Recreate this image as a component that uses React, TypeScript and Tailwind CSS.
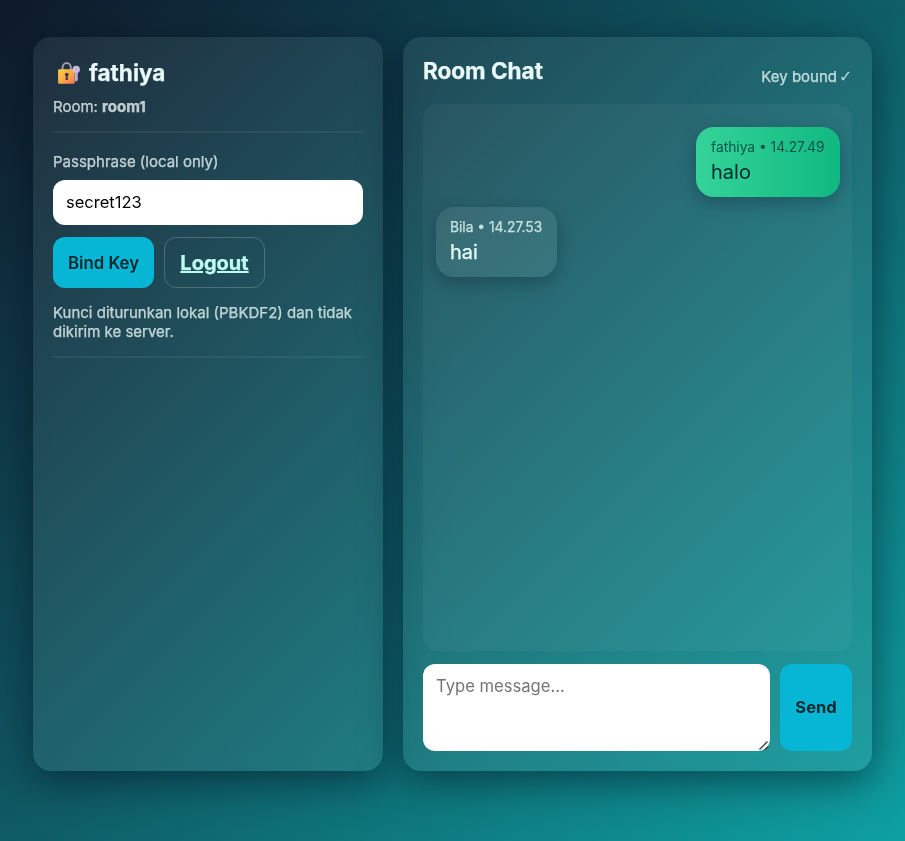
import React from "react";

const card =
  "rounded-[18px] bg-white/[0.07] p-5 shadow-[0_10px_40px_rgba(2,6,23,0.5)] backdrop-blur-[8px]";

const note = "text-[15px] leading-[19px] text-[#f0fcfa]/75 [-webkit-text-stroke:0.25px]";

function LockKey() {
  return (
    <svg width="24" height="24" viewBox="0 0 24 24" className="ml-[3px] shrink-0">
      <defs>
        <linearGradient id="lock" x1="0" y1="0" x2="1" y2="1">
          <stop offset="0" stopColor="#ffd04a" />
          <stop offset="0.55" stopColor="#fba83e" />
          <stop offset="1" stopColor="#f5745a" />
        </linearGradient>
      </defs>
      <path d="M6.6 9V6.2a4.1 4.1 0 0 1 8.2 0V9" fill="none" stroke="#a99fb3" strokeWidth="1.9" />
      <rect x="2.1" y="8.3" width="16.6" height="14.4" rx="1.2" fill="url(#lock)" />
      <circle cx="10.8" cy="13.6" r="1.9" fill="#4b3054" />
      <path d="M10 14.5h1.6l.4 4.6H9.5z" fill="#4b3054" />
      <circle cx="20.2" cy="8.5" r="3.7" fill="#cbbcdc" />
      <path d="M18.8 11h3v8l-1.4 1.8-1.6-1.4z" fill="#c0aed4" />
      <circle cx="20.4" cy="7.1" r=".7" fill="#a897bb" />
    </svg>
  );
}

export default function App() {
  return (
    <div className="flex h-[841px] gap-5 bg-[linear-gradient(135deg,#0f192b,#0ea0a1)] pt-[37px] pr-[33px] pb-[70px] pl-[33px] font-['Inter',sans-serif] text-[#e6fffa]">
      <aside className={`${card} w-[350px] shrink-0`}>
        <h2 className="flex h-8 items-center text-[22.5px] leading-8 font-bold text-[#e9f9f8] [-webkit-text-stroke:0.25px]">
          <LockKey />
          <span className="ml-[9px]">fathiya</span>
        </h2>
        <p className={`${note} mt-2`}>
          Room: <b className="font-bold">room1</b>
        </p>
        <hr className="mt-[15px] border-t-2 border-white/[0.06]" />
        <label className={`${note} mt-[19px] block`}>Passphrase (local only)</label>
        <input
          className="mt-[9px] block h-[45px] w-full rounded-xl bg-white px-[13px] pb-[2px] text-[16.5px] text-black"
          defaultValue="secret123"
        />
        <div className="mt-3 flex gap-[10px]">
          <button className="h-[51px] w-[101px] rounded-xl bg-[#06b6d4] pt-[2px] text-[16.8px] font-semibold whitespace-nowrap text-[#04282c]">
            Bind Key
          </button>
          <a className="flex h-[51px] w-[101px] items-center justify-center rounded-xl border border-white/20 text-[20px] font-bold text-[#bdfcf3] underline [-webkit-text-stroke:0.25px]">
            Logout
          </a>
        </div>
        <p className={`${note} mt-[15px]`}>
          Kunci diturunkan lokal (PBKDF2) dan tidak dikirim ke server.
        </p>
        <hr className="mt-[15px] border-t-2 border-white/[0.06]" />
      </aside>

      <main className={`${card} flex min-w-0 flex-1 flex-col`}>
        <header className="flex h-[47px] justify-between">
          <h2 className="text-[22.5px] leading-[28px] font-bold text-[#e9f9f8] [-webkit-text-stroke:0.25px]">
            Room Chat
          </h2>
          <span className={`${note} mt-[10px] flex`}>
            Key bound
            <span className="ml-[2px] w-[13px] font-['DejaVu_Sans',sans-serif] text-[16px] [-webkit-text-stroke:0px]">✓</span>
          </span>
        </header>
        <section className="flex flex-1 flex-col rounded-[14px] bg-white/[0.04] pt-[23px] pr-3 pl-[13px]">
          <div className="h-[70px] w-[144px] self-end rounded-[18px] bg-[linear-gradient(90deg,#34d399,#10b981)] px-[15px] pt-[11px] text-[#04282c] shadow-[0_6px_18px_rgba(2,6,23,0.25)]">
            <div className="text-[13.8px] leading-[18px] whitespace-nowrap opacity-75">fathiya • 14.27.49</div>
            <div className="mt-[2px] text-[20px] leading-[28px]">halo</div>
          </div>
          <div className="mt-[10px] h-[70px] w-[121px] self-start rounded-[18px] bg-white/[0.08] px-[14px] pt-[11px] shadow-[0_6px_18px_rgba(2,6,23,0.25)] [-webkit-text-stroke:0.25px]">
            <div className="text-[13.8px] leading-[18px] whitespace-nowrap opacity-80">Bila • 14.27.53</div>
            <div className="mt-[2px] text-[20px] leading-[28px]">hai</div>
          </div>
        </section>
        <footer className="mt-[13px] flex h-[87px] gap-[10px]">
          <div className="relative min-w-0 flex-1">
            <textarea
              className="block h-full w-full resize-none rounded-xl bg-white px-[13px] py-[10px] text-[16.6px] leading-6 text-black placeholder:text-[#757575]"
              placeholder="Type message..."
            />
            <svg width="12" height="12" viewBox="0 0 12 12" className="absolute right-0 bottom-0">
              <path d="M1.5 10.5l8-8M6.5 11l3.5-3.5" stroke="#4a4a4a" strokeWidth="1.5" fill="none" />
            </svg>
          </div>
          <button className="w-[72px] rounded-xl bg-[#06b6d4] text-[16.5px] font-bold text-[#04282c]">
            Send
          </button>
        </footer>
      </main>
    </div>
  );
}
